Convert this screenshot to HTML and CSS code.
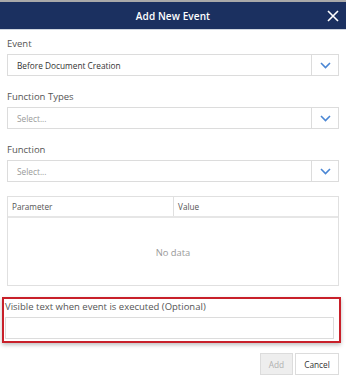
FILE: index.html
```html
<!DOCTYPE html>
<html>
<head>
<meta charset="utf-8">
<link rel="stylesheet" href="styles.css">
</head>
<body>
<div class="dialog">
  <div class="header">
    <span class="title">Add New Event</span>
    <span class="close">
      <svg width="12" height="12" viewBox="0 0 12 12"><path d="M1 1 L11 11 M11 1 L1 11" stroke="#fff" stroke-width="1.6" fill="none"/></svg>
    </span>
  </div>
  <div class="body">
    <div class="field first">
      <div class="label">Event</div>
      <div class="select">
        <span class="value">Before Document Creation</span>
        <span class="btn"><svg width="11" height="7" viewBox="0 0 11 7"><path d="M1 1 L5.5 5.5 L10 1" stroke="#4a86d4" stroke-width="1.6" fill="none"/></svg></span>
      </div>
    </div>
    <div class="field">
      <div class="label">Function Types</div>
      <div class="select">
        <span class="value placeholder">Select...</span>
        <span class="btn"><svg width="11" height="7" viewBox="0 0 11 7"><path d="M1 1 L5.5 5.5 L10 1" stroke="#4a86d4" stroke-width="1.6" fill="none"/></svg></span>
      </div>
    </div>
    <div class="field">
      <div class="label">Function</div>
      <div class="select">
        <span class="value placeholder">Select...</span>
        <span class="btn"><svg width="11" height="7" viewBox="0 0 11 7"><path d="M1 1 L5.5 5.5 L10 1" stroke="#4a86d4" stroke-width="1.6" fill="none"/></svg></span>
      </div>
    </div>
    <div class="grid">
      <div class="grid-head">
        <div class="col col1">Parameter</div>
        <div class="col col2">Value</div>
      </div>
      <div class="grid-body">No data</div>
    </div>
    <div class="highlight">
      <div class="label">Visible text when event is executed (Optional)</div>
      <div class="textbox"></div>
    </div>
    <div class="actions">
      <button class="button disabled">Add</button>
      <button class="button">Cancel</button>
    </div>
  </div>
</div>
</body>
</html>
```
FILE: styles.css
```css
html, body {
  margin: 0;
  padding: 0;
  background: #fff;
  font-family: "Open Sans", "Liberation Sans", sans-serif;
}
.dialog {
  width: 346px;
  height: 388px;
  overflow: hidden;
}
.header {
  height: 27px;
  border-top: 2px solid #a9a9a9;
  border-bottom: 1px solid #cfd5df;
  background: #1b3060;
  display: flex;
  align-items: center;
  justify-content: center;
  position: relative;
}
.title {
  color: #fff;
  font-size: 10px;
  font-weight: 600;
  letter-spacing: 0.1px;
}
.close {
  position: absolute;
  right: 7px;
  top: 8px;
  width: 12px;
  height: 12px;
  display: flex;
}
.body {
  padding: 7px 7px 0 7px;
}
.field {
  margin-top: 14px;
}
.field.first {
  margin-top: 0;
}
.label {
  font-size: 9.5px;
  line-height: 14px;
  color: #555;
  margin-bottom: 3px;
  white-space: nowrap;
}
.select {
  height: 20px;
  border: 1px solid #dcdcdc;
  display: flex;
  align-items: stretch;
}
.value {
  flex: 1;
  font-size: 8.3px;
  color: #333;
  display: flex;
  align-items: center;
  padding-left: 9px;
}
.value.placeholder {
  color: #999;
}
.btn {
  width: 26px;
  border-left: 1px solid #dcdcdc;
  display: flex;
  align-items: center;
  justify-content: center;
  padding-top: 1px;
}
.grid {
  margin-top: 14px;
  border: 1px solid #e0e0e0;
  height: 88px;
  display: flex;
  flex-direction: column;
}
.grid-head {
  height: 19px;
  border-bottom: 2px solid #e6e6e6;
  display: flex;
}
.col {
  font-size: 8.2px;
  color: #555;
  display: flex;
  align-items: center;
  padding-left: 4px;
}
.col1 {
  width: 161px;
  border-right: 1px solid #e0e0e0;
}
.col2 {
  flex: 1;
}
.grid-body {
  flex: 1;
  display: flex;
  align-items: center;
  justify-content: center;
  font-size: 9.4px;
  color: #999;
  padding-top: 2px;
}
.highlight {
  margin: 11px -2px 0 -5px;
  border: 2px solid #c8202a;
  padding: 1px 5px 2px 1px;
  box-shadow: 0 2px 4px rgba(0,0,0,0.25);
}
.highlight .label {
  color: #555;
}
.textbox {
  height: 20px;
  border: 1px solid #dcdcdc;
}
.actions {
  margin-top: 10px;
  display: flex;
  justify-content: flex-end;
  gap: 2px;
}
.button {
  height: 22px;
  border: 1px solid #dcdcdc;
  background: #fff;
  font-family: "Open Sans", "Liberation Sans", sans-serif;
  font-size: 8.3px;
  color: #333;
  padding: 0;
  margin: 0;
}
.button.disabled {
  width: 33px;
  background: #eee;
  color: #b0b0b0;
}
.button:not(.disabled) {
  width: 44px;
}
```
